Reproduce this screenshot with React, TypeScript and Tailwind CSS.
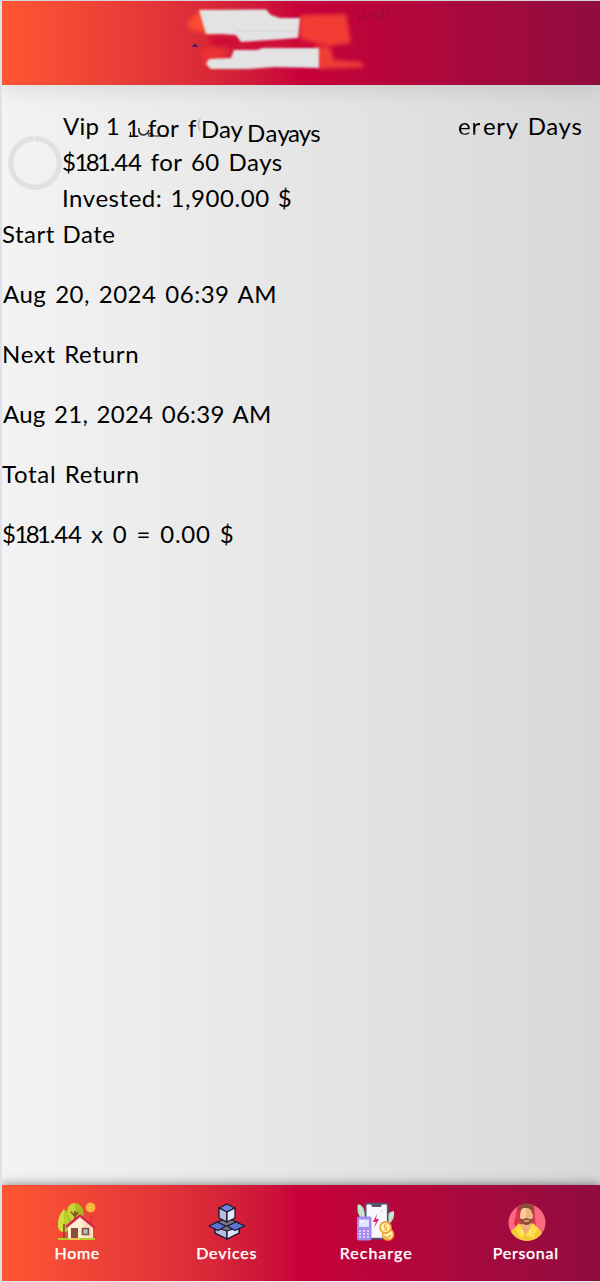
import React from "react";

function HeaderSmudge() {
  return (
    <svg className="block h-[84px] w-[220px]" viewBox="170 1 220 84">
      <defs>
        <filter id="soft" x="-20%" y="-20%" width="140%" height="140%"><feGaussianBlur stdDeviation="2.2" /></filter>
        <filter id="edge" x="-10%" y="-10%" width="120%" height="120%"><feGaussianBlur stdDeviation="0.8" /></filter>
      </defs>
      <g filter="url(#soft)">
        <path d="M199 11L187 22L189 29L203 33L216 32L209 10Z" fill="#fb4931" />
        <path d="M202 50L216 47L228 51L215 68L203 65Z" fill="#f03433" opacity=".75" />
        <path d="M208 36H262L298 42L330 40V45L260 48L212 46Z" fill="#d00735" />
        <path d="M300 15L346 14L351 43L331 46L299 38Z" fill="#f23c34" />
        <path d="M316 46L330 47L334 60L362 62L364 67L318 69Z" fill="#f03c35" />
      </g>
      <g fill="#e3e3e3" filter="url(#edge)">
        <path d="M199 10L266 9.5L271 15L280 18H300L298 38L270 40L241 42L236 35L221 34L206 34L203 24Z" />
        <path d="M234 50L257 50L263 48H319V68L275 67L247 69L211 69L206 64L209 59L231 58Z" />
      </g>
      <path d="M236 31H298" stroke="#cccccc" strokeWidth=".6" />
      <path d="M192 47L195 43L198 47Z" fill="#412072" />
      <path d="M359 14V20M364 13V17Q367 20 370 16V12M376 11V16Q379 20 383 17V10M386 18L389 10" fill="none" stroke="#900c35" strokeWidth="1.2" />
    </svg>
  );
}

function HomeIcon() {
  return (
    <svg className="h-10 w-10" viewBox="0 0 40 40">
      <path d="M7 7C2 13 1 18 1 23C1 28 4 30 8 30S13 26 13 21Q13 12 7 7Z" fill="#b8cd2e" />
      <path d="M7 7V30C3 30 1 27 1 23C1 18 2 13 7 7Z" fill="#d4dc3b" />
      <ellipse cx="18" cy="11" rx="8.5" ry="10" fill="#a7be25" />
      <path d="M18 1C13 1 10 5 10 12L15 20L19 12Z" fill="#c9d334" />
      <path d="M18 9V18M14 10L18 14L21 10M7 22V36" stroke="#8a482e" strokeWidth="1.6" fill="none" />
      <circle cx="33.5" cy="5.5" r="5" fill="#fbb13b" />
      <path d="M30 4L35 9M31 1L37 7M31 8L37 2" stroke="#ffd16a" strokeWidth=".6" />
      <path d="M11 24L23 14L36 25V36H11Z" fill="#fff0d2" />
      <path d="M23 14L36 25V36H28Z" fill="#ffe2bb" />
      <path d="M34 14V21" stroke="#dd3550" strokeWidth="2" />
      <path d="M9 25L23 13.5L38 26" fill="none" stroke="#d8274c" strokeWidth="2.5" />
      <path d="M14 26H21V37H14Z" fill="#895038" />
      <path d="M25.5 26.5H31.5V32.5H25.5Z" fill="#9fc5c3" stroke="#895038" strokeWidth="1.7" />
      <path d="M1 37H38" stroke="#b7c82b" strokeWidth="2" />
      <path d="M12 37H23" stroke="#f6c451" strokeWidth="2" />
    </svg>
  );
}

function DevicesIcon() {
  return (
    <svg className="h-10 w-10" viewBox="0 0 40 40" stroke="#17172f" strokeWidth="1.3" strokeLinejoin="round">
      <path d="M20 16L32 21V31L20 37L8 31V21Z" fill="#777783" />
      <path d="M8 25L20 29V37L8 31Z" fill="#b7bcdf" />
      <path d="M20 29L32 25V31L20 37Z" fill="#dee1f7" />
      <path d="M10 20L19 24L11 28.5L2 24ZM29 20L38 24L28 28.5L20 24Z" fill="#5c74cf" />
      <path d="M12 6L20 2L28 6L20 10Z" fill="#6d86dc" />
      <path d="M12 6L20 10V20L12 16Z" fill="#b7bfdf" />
      <path d="M28 6L20 10V20L28 16Z" fill="#e5e7fa" />
    </svg>
  );
}

function RechargeIcon() {
  return (
    <svg className="h-10 w-10" viewBox="0 0 40 40">
      <path d="M2 2Q9 3 9 15H4Q0 9 2 2ZM38 9Q31 9 29 20L34 21Q39 17 38 9Z" fill="#b5e5c7" />
      <path d="M3 4L8 15M37 11L31 20" stroke="#e3fae8" strokeWidth=".8" />
      <rect x="9.7" y="1.7" width="22" height="35" rx="2" fill="#f8f8fc" stroke="#555770" strokeWidth="1.7" />
      <path d="M15 2H26L25 5H16Z" fill="#555770" />
      <circle cx="26" cy="9" r="1.5" fill="#e4e4eb" />
      <path d="M21 12L17 20H20L18 26L23 17H20Z" fill="#e02167" />
      <rect x="1" y="14.5" width="14.5" height="24" rx="2" fill="#a68af0" />
      <rect x="3" y="17.5" width="10" height="7.5" fill="#dce5ff" />
      <path d="M4 19H9M4 20L8 24" stroke="#fff" />
      <path d="M3 29H13M3 32H13M3 35H13" stroke="#eee6ff" strokeWidth="1.4" strokeDasharray="2 2" />
      <circle cx="32" cy="32.5" r="5.5" fill="#fff1bd" stroke="#f2a533" strokeWidth="1.6" />
      <path d="M28 34L31 36L35 33" stroke="#f2a533" strokeWidth="1.5" fill="none" />
      <circle cx="29.5" cy="25.5" r="5.5" fill="#fff1bd" stroke="#f2a533" strokeWidth="1.8" />
      <path d="M31 23H28.5V25.5H30.5V28H28" fill="none" stroke="#f2a533" strokeWidth="1.2" />
    </svg>
  );
}

function PersonalIcon() {
  return (
    <svg className="h-10 w-10" viewBox="0 0 40 40">
      <defs><clipPath id="avatar"><circle cx="21" cy="20.5" r="18.5" /></clipPath></defs>
      <g clipPath="url(#avatar)">
        <path d="M0 0H40V40H0Z" fill="#fb6880" />
        <path d="M12 2L8 22L13 29L30 27L28 3Z" fill="#e72d4d" />
        <path d="M3 35Q5 26 14 23H27Q35 26 37 35V40H3Z" fill="#f6c936" />
        <path d="M14 22L20 33L27 22Z" fill="#efb080" />
        <path d="M13 21L19 33L14 36L9 26ZM27 21L20 33L27 36L32 26Z" fill="#ffdc47" />
        <path d="M16 28V33M24 28V33" stroke="#fff1a0" strokeWidth="1.3" />
      </g>
      <path d="M14 6H27V18Q25 24 20 24Q15 22 14 18Z" fill="#fec798" />
      <path d="M20 6H27V18Q25 24 20 24Z" fill="#efb282" />
      <path d="M14 13L12.5 7L14 3L20 1L26 3L28 7L27 13L25 8L22 6H17L15 8Z" fill="#894d31" />
      <path d="M14 16L16.5 17.5Q20 15 24.5 17.5L27 16V19Q24 23 20 23Q15 22 14 19Z" fill="#894d31" />
      <path d="M18 19H23" stroke="#efb282" strokeWidth="1.5" />
    </svg>
  );
}

function DailyAmount() {
  return (
    <span className="tracking-[-0.1px]">
      <span className="tracking-[-1.5px]">$</span><span className="tracking-[-2.6px]">18</span><span className="tracking-[-1.2px]">1.</span>44
    </span>
  );
}

const tabs = [
  { label: "Home", icon: <HomeIcon />, cls: "tracking-[0.7px]" },
  { label: "Devices", icon: <DevicesIcon />, cls: "tracking-[0.8px]" },
  { label: "Recharge", icon: <RechargeIcon />, cls: "tracking-[1px]" },
  { label: "Personal", icon: <PersonalIcon />, cls: "tracking-[0.7px]" },
];

export default function App() {
  return (
    <div className="flex h-[1282px] w-[600px] flex-col overflow-hidden border-t border-b border-l-2 border-t-[#d4d4dc] border-b-[#e8e8f0] border-l-[#dde1ee] bg-linear-to-r from-[#f3f3f3] to-[#d8d8d8] font-['Lato','Open_Sans',sans-serif] text-2xl leading-9 whitespace-nowrap text-black">
      <header className="flex h-[84px] shrink-0 bg-linear-to-r from-[#ff5733] via-[#c70039] to-[#900c3f] pl-[168px] shadow-[0_4px_20px_rgba(0,0,0,0.1)]">
        <HeaderSmudge />
      </header>
      <main className="grow pt-[23px]">
        <section className="flex h-[108px]">
          <div className="flex w-[60px] shrink-0 pt-7 pl-[5px]">
            <svg className="h-[55px] w-[55px] shrink-0" viewBox="0 0 55 55">
              <circle cx="28" cy="27" r="24.3" fill="none" stroke="#e1e1e1" strokeWidth="5.2" />
              <path d="M27.5 0V6" stroke="#f0f0f0" />
            </svg>
          </div>
          <div className="w-[538px]">
            <div className="flex h-9">
              <span className="w-[64px] pl-px tracking-[0.3px]">Vip 1</span>
              <span className="w-[14px] pt-0.5">1</span>
              <svg className="h-9 w-2 overflow-visible" viewBox="0 0 8 36"><path d="M-9.5 24V28M-6 25V29" fill="none" stroke="#222" strokeWidth="1.2" /><path d="M-1 20Q-2 26 3 27Q7 27 9 22" fill="none" stroke="#222" strokeWidth="1.5" /><path d="M8 28H28M8 27Q10 23 14 28" fill="none" stroke="#222" strokeWidth="1.2" /></svg>
              <span className="w-10 pt-0.5 tracking-[0.2px]">for</span>
              <span className="w-[9px] pt-0.5">f</span>
              <span className="w-1 pt-1.5 text-center text-sm text-[#aaa]">(</span>
              <span className="w-[46px] pt-[3px]">Day</span>
              <span className="w-[41px] pt-[7px] tracking-[0.5px]">Day</span>
              <span className="w-[170px] pt-[7px] tracking-[-0.8px]">ays</span>
              <span className="w-[25px] bg-linear-to-b from-black from-60% to-[#777] to-80% bg-clip-text tracking-[0.8px] text-transparent">er</span>
              <span className="tracking-[0.7px] [word-spacing:2.5px]">ery Days</span>
            </div>
            <div className="tracking-[0.5px] [word-spacing:2.2px]"><DailyAmount /> for 60 Days</div>
            <div className="tracking-[0.55px] [word-spacing:1.5px]">Invested: 1,900.00 $</div>
          </div>
        </section>
        <dl className="flex flex-col gap-6">
          <dt className="tracking-[0.5px] [word-spacing:1px]">Start Date</dt>
          <dd className="pl-px tracking-[0.5px] [word-spacing:2.2px]">Aug 20, 2024 06:39 AM</dd>
          <dt className="tracking-[0.7px] [word-spacing:1.5px]">Next Return</dt>
          <dd className="pl-px tracking-[0.25px] [word-spacing:2.1px]">Aug 21, 2024 06:39 AM</dd>
          <dt className="tracking-[0.7px] [word-spacing:1.5px]">Total Return</dt>
          <dd className="tracking-[0.7px] [word-spacing:2.3px]"><DailyAmount /> x 0 = 0.00 $</dd>
        </dl>
      </main>
      <nav className="grid h-24 shrink-0 grid-cols-4 bg-linear-to-r from-[#ff5733] via-[#c70039] to-[#900c3f] text-base leading-5 font-medium text-white shadow-[0_0_10px_rgba(0,0,0,0.5)] [-webkit-text-stroke:0.25px_white]">
        {tabs.map((tab) => (
          <a key={tab.label} className="flex flex-col items-center gap-px pt-[17px] pl-px">
            {tab.icon}
            <span className={tab.cls}>{tab.label}</span>
          </a>
        ))}
      </nav>
    </div>
  );
}
